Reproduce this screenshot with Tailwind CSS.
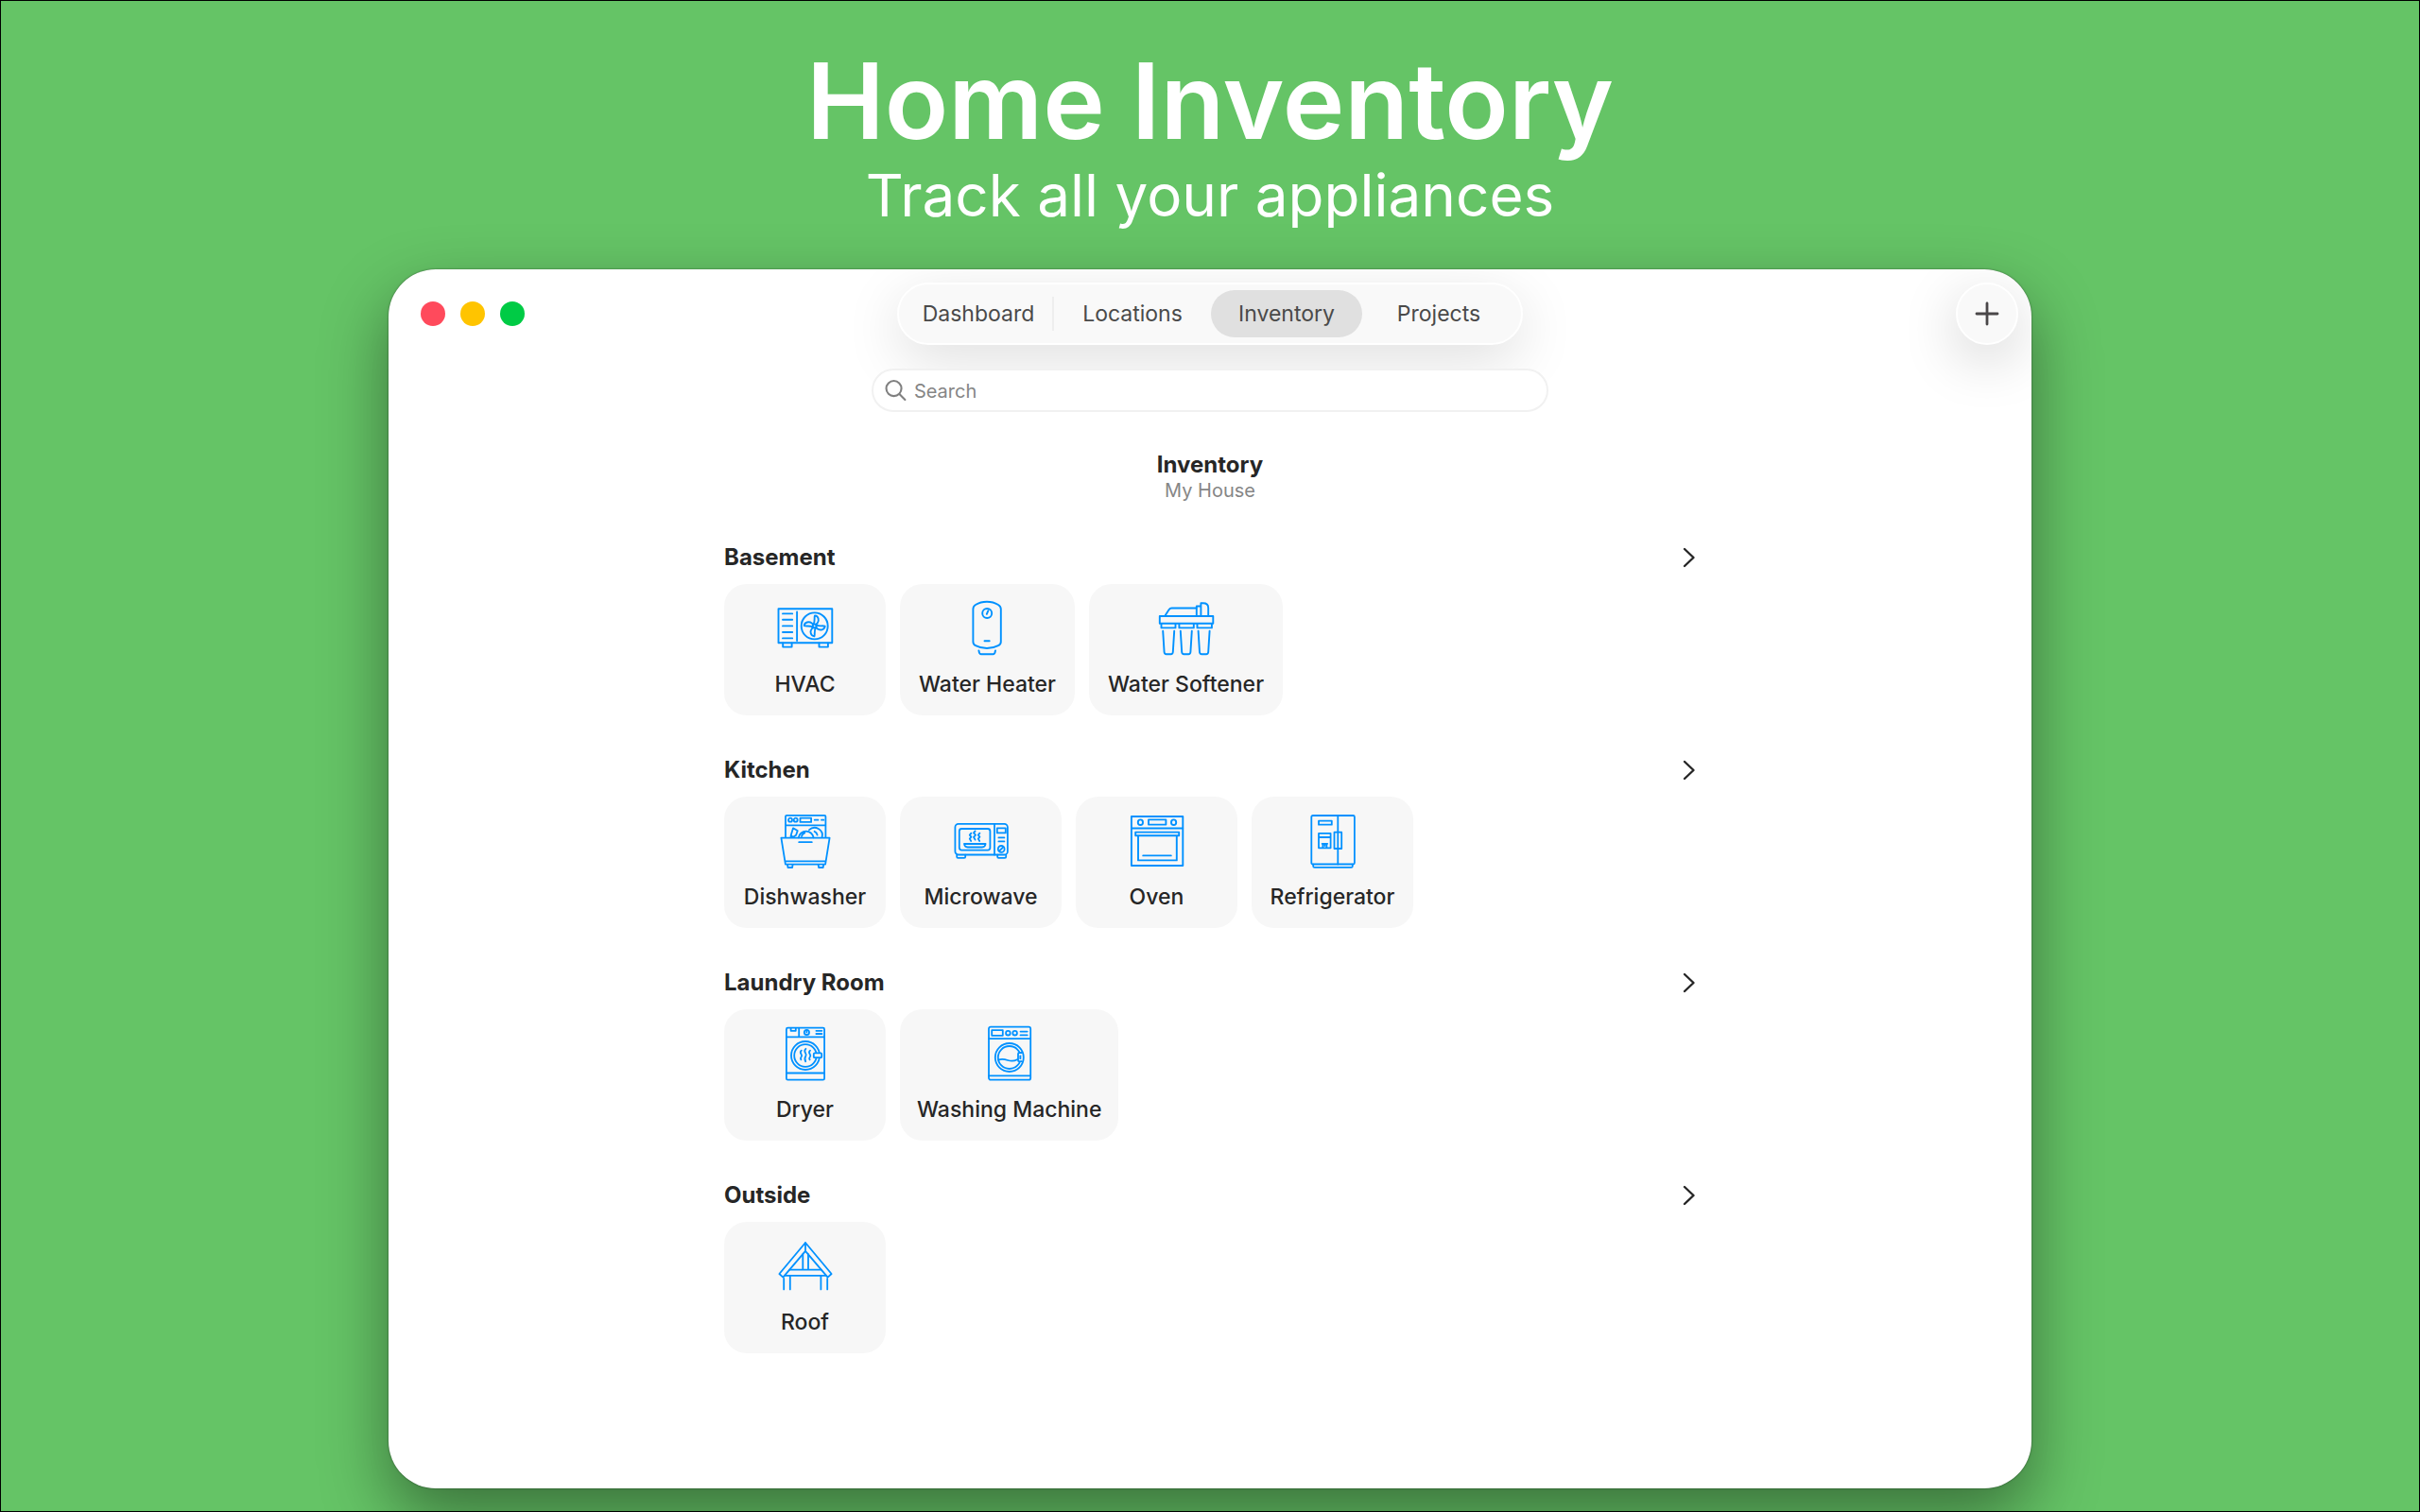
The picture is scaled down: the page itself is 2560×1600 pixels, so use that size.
<!DOCTYPE html>
<html lang="en">
<head>
    <meta charset="UTF-8">
    <meta name="viewport" content="width=device-width, initial-scale=1.0">
    <title>Home Inventory</title>
    <script src="https://cdn.jsdelivr.net/npm/@tailwindcss/browser@4"></script>
</head>
<body class="min-h-screen border border-black bg-[#65c466] font-['Inter',sans-serif] text-[#262626]">
    <header class="pt-[46px] text-center text-white">
        <h1 class="text-[111px] leading-[120px] font-semibold">Home Inventory</h1>
        <p class="text-[62px] leading-[79px]">Track all your appliances</p>
    </header>

    <main class="mx-auto mt-[39px] min-h-[1290px] w-full max-w-[1738px] overflow-hidden rounded-[50px] bg-white shadow-[0_0_2px_rgba(0,0,0,0.5),0_30px_70px_rgba(0,0,0,0.42)]">
        <!-- Toolbar -->
        <div class="grid grid-cols-[1fr_auto_1fr] items-center px-3.5 pt-3.5">
            <div class="flex gap-4 pl-5">
                <button aria-label="Close" class="size-[26px] rounded-full bg-[#ff4a5c]"></button>
                <button aria-label="Minimize" class="size-[26px] rounded-full bg-[#ffc400]"></button>
                <button aria-label="Zoom" class="size-[26px] rounded-full bg-[#00cb45]"></button>
            </div>

            <nav class="flex h-[66px] items-center rounded-full border-2 border-white bg-[#f9f9f9] px-1.5 text-[23px] text-[#4a4a4a] shadow-[0_16px_60px_rgba(0,0,0,0.13)]">
                <button class="h-[50px] w-[156px] rounded-full">Dashboard</button>
                <span class="h-9 w-0.5 bg-[#eeeeee]"></span>
                <button class="h-[50px] w-[166px] rounded-full">Locations</button>
                <button class="h-[50px] w-[160px] rounded-full bg-[#e0e0e0]">Inventory</button>
                <button class="h-[50px] w-[162px] rounded-full">Projects</button>
            </nav>

            <button aria-label="Add item" class="flex size-[66px] items-center justify-center justify-self-end rounded-full border-2 border-white bg-[#f9f9f9] shadow-[0_16px_60px_rgba(0,0,0,0.18)]">
                <svg class="size-[26px]" viewBox="0 0 26 26" fill="none" stroke="#4a4749" stroke-width="2.8" stroke-linecap="round">
                    <path d="M13 2v22M2 13h22" />
                </svg>
            </button>
        </div>

        <!-- Search -->
        <label class="relative mx-auto mt-[25px] flex h-[46px] w-full max-w-[716px] items-center gap-2 rounded-full border-2 border-[#f1f1f1] bg-white px-3">
            <svg class="size-6" viewBox="0 0 24 24" fill="none" stroke="#808080" stroke-width="2.2" stroke-linecap="round">
                <circle cx="10" cy="10" r="8.4" />
                <path d="M16.2 16.2L22.4 22.4" />
            </svg>
            <input type="search" placeholder="Search" class="w-full bg-transparent pt-0.5 text-[20px] outline-none placeholder:text-[#868686]">
        </label>

        <div class="mt-[42px] text-center">
            <h2 class="text-[24px] leading-7 font-bold">Inventory</h2>
            <p class="text-[20px] leading-[26px] text-[#868686]">My House</p>
        </div>

        <div class="mx-auto mt-11 flex w-full max-w-[1028px] flex-col gap-11">
            <section>
                <a href="#basement" class="mb-3.5 flex items-center justify-between">
                    <h3 class="text-[24px] leading-7 font-bold">Basement</h3>
                    <svg class="h-[22px] w-3.5" viewBox="0 0 14 22" fill="none" stroke="#262626" stroke-width="2.4" stroke-linecap="round" stroke-linejoin="round">
                        <path d="M2 2l9.500 9L2 20" />
                    </svg>
                </a>
                <div class="flex gap-[15px]">
                    <button class="flex min-w-[171px] flex-col items-center gap-[15px] rounded-3xl bg-[#f7f7f7] px-5 pt-[17px] pb-[19px]">
                        <svg class="size-[60px]" viewBox="0 0 60 60" fill="none" stroke="#0091ff" stroke-width="1.9" stroke-linecap="round" stroke-linejoin="round">
                            <rect x="1.5" y="9.2" width="56.8" height="36" />
                            <path d="M21.1 12.5V43M6 14.4h10.2M6 20.8h10.2M6 27.4h10.2M6 34h10.2M6 40.4h10.2" />
                            <path d="M6.2 45.4v4.2h9.4v-4.2M44.5 45.4v4.2h9.4v-4.2" />
                            <circle cx="39.7" cy="27.4" r="14" />
                            <circle cx="39.7" cy="27.4" r="2" />
                            <path d="M38.6 25.6C40.5 22 39 19 40 16.4c3.8.4 5 5 2.6 8.2l-1.8 1.5" />
                            <path d="M41.5 26.3c3.6 1.9 6.6.4 9.2 1.4-.4 3.8-5 5-8.2 2.6l-1.5-1.8" />
                            <path d="M40.8 29.2c-1.9 3.6-.4 6.6-1.4 9.2-3.8-.4-5-5-2.6-8.2l1.8-1.5" />
                            <path d="M37.9 28.5c-3.6-1.9-6.6-.4-9.2-1.4.4-3.8 5-5 8.2-2.6l1.5 1.8" />
                        </svg>
                        <span class="text-[23px] leading-7 font-medium">HVAC</span>
                    </button>
                    <button class="flex min-w-[171px] flex-col items-center gap-[15px] rounded-3xl bg-[#f7f7f7] px-5 pt-[17px] pb-[19px]">
                        <svg class="size-[60px]" viewBox="0 0 60 60" fill="none" stroke="#0091ff" stroke-width="1.9" stroke-linecap="round" stroke-linejoin="round">
                            <path d="M15.4 9.5C15.4 7 16 6.2 18 5c7-4.4 17-4.4 24 0 2 1.2 2.8 2 2.8 4.5v34.5c0 2.5-.8 3.3-2.8 4.2-7 3.8-17 3.8-24 0-2-.9-2.6-1.7-2.6-4.2z" />
                            <circle cx="30.2" cy="14" r="5" />
                            <path d="M29.8 14.8l1.6-3.6M27.5 43.2h5.2" />
                            <path d="M21.4 53.4c.3 2.4 1 3.9 2.6 3.9h12.4c1.6 0 2.3-1.5 2.6-3.9" />
                        </svg>
                        <span class="text-[23px] leading-7 font-medium">Water Heater</span>
                    </button>
                    <button class="flex min-w-[171px] flex-col items-center gap-[15px] rounded-3xl bg-[#f7f7f7] px-5 pt-[17px] pb-[19px]">
                        <svg class="size-[60px]" viewBox="0 0 60 60" fill="none" stroke="#0091ff" stroke-width="1.9" stroke-linecap="round" stroke-linejoin="round">
                            <rect x="1.8" y="17" width="56.5" height="7.8" />
                            <path d="M7.5 16.4l4-6.2c.8-1.2 1.6-1.7 3-1.7h26" />
                            <path d="M40.8 15.8V6.5h4.6M45.4 16.4V3.2h2.2c3.4 0 5.6 2 5.6 5v8.2" />
                            <path d="M3.5 25v4.4h15V25M22.4 25v4.4h15.4V25M41.5 25v4.4h15.4V25" />
                            <path d="M5.2 32.6l1.4 22.4c.1 1.5.8 2.2 2.2 2.2h4.8c1.4 0 2.1-.7 2.2-2.2l1.4-22.4" />
                            <path d="M23.8 32.6l1.4 22.4c.1 1.5.8 2.2 2.2 2.2h4.8c1.4 0 2.1-.7 2.2-2.2l1.4-22.4" />
                            <path d="M42.6 32.6l1.4 22.4c.1 1.5.8 2.2 2.2 2.2h4.8c1.4 0 2.1-.7 2.2-2.2l1.4-22.4" />
                        </svg>
                        <span class="text-[23px] leading-7 font-medium">Water Softener</span>
                    </button>
                </div>
            </section>

            <section>
                <a href="#kitchen" class="mb-3.5 flex items-center justify-between">
                    <h3 class="text-[24px] leading-7 font-bold">Kitchen</h3>
                    <svg class="h-[22px] w-3.5" viewBox="0 0 14 22" fill="none" stroke="#262626" stroke-width="2.4" stroke-linecap="round" stroke-linejoin="round">
                        <path d="M2 2l9.500 9L2 20" />
                    </svg>
                </a>
                <div class="flex gap-[15px]">
                    <button class="flex min-w-[171px] flex-col items-center gap-[15px] rounded-3xl bg-[#f7f7f7] px-[18px] pt-[17px] pb-[19px]">
                        <svg class="size-[60px]" viewBox="0 0 60 60" fill="none" stroke="#0091ff" stroke-width="1.8" stroke-linecap="round" stroke-linejoin="round">
                            <path d="M9 26V4c0-.8.4-1.2 1.2-1.2h40c.8 0 1.2.4 1.2 1.2v22M9 13.4h42.4" />
                            <circle cx="14" cy="7.7" r="2" />
                            <circle cx="19.7" cy="7.7" r="2" />
                            <path d="M24.500 5.700h11.600v4.200H24.500zM39.700 7.700h3.800M47 7.700h2.400" />
                            <path d="M17 16.300l4.700 2.800-1.600 4.600-3.400 2.200-2-2zM15.400 25.600l-1-.6" />
                            <path d="M22.800 26.300a8 8 0 0 1 15.800 0M26 25.200a5 5 0 0 1 3.300-3.800M34 18.200a8.200 8.200 0 0 1 13.600 8M39.600 19.800a5 5 0 0 1 3 3.800" />
                            <path d="M4.400 26.600h51.200l-4.500 28H8.900zM8.700 51.400h42.600M23.200 31.200h13.600" />
                            <path d="M11 54.800l.5 3.200h4.600l.5-3.200M43.600 54.800l.5 3.200h4.600l.5-3.200" />
                        </svg>
                        <span class="text-[23px] leading-7 font-medium">Dishwasher</span>
                    </button>
                    <button class="flex min-w-[171px] flex-col items-center gap-[15px] rounded-3xl bg-[#f7f7f7] px-[18px] pt-[17px] pb-[19px]">
                        <svg class="size-[60px]" viewBox="0 0 60 60" fill="none" stroke="#0091ff" stroke-width="1.8" stroke-linecap="round" stroke-linejoin="round">
                            <rect x="2.4" y="11.9" width="55.5" height="32.6" rx="3.5" />
                            <path d="M44 12v32.5" />
                            <rect x="6.8" y="17" width="32.6" height="22.6" rx="2.5" />
                            <path d="M4.2 44.7v2c0 .8.4 1.2 1.2 1.2h6.6c.8 0 1.2-.4 1.2-1.2v-2M47.2 44.7v2c0 .8.4 1.2 1.2 1.2h6.6c.8 0 1.2-.4 1.2-1.2v-2" />
                            <path d="M46.8 16.4h9v5h-9zM48.4 26.4h6M48.4 30.4h6" />
                            <circle cx="51.2" cy="38.4" r="3.4" />
                            <path d="M49.6 40l3.2-3.2" />
                            <path d="M12 33h22.6c-.3 2.3-1.4 3.5-3.6 3.5H15.6c-2.2 0-3.3-1.2-3.6-3.5z" />
                            <path d="M19.4 21.600l-1.600 2 1.600 2-1.600 2 1.400 2.400M23.600 19.400l-1.600 2 2 2.200-2 2.200 1.600 2.800M28.400 21.600l-1.600 2 1.600 2-1.600 2 1.400 2.400" />
                        </svg>
                        <span class="text-[23px] leading-7 font-medium">Microwave</span>
                    </button>
                    <button class="flex min-w-[171px] flex-col items-center gap-[15px] rounded-3xl bg-[#f7f7f7] px-[18px] pt-[17px] pb-[19px]">
                        <svg class="size-[60px]" viewBox="0 0 60 60" fill="none" stroke="#0091ff" stroke-width="1.9" stroke-linecap="round" stroke-linejoin="round">
                            <rect x="2.9" y="4" width="54.4" height="52" />
                            <path d="M3 16.5h54.2" />
                            <ellipse cx="12.4" cy="10.2" rx="2.6" ry="2.8" />
                            <ellipse cx="47.6" cy="10.2" rx="2.6" ry="2.8" />
                            <path d="M21 7.4h18.4v5.2H21z" />
                            <path d="M7.2 20.6h46v3.6h-46zM10 24.4v26h40.8v-26M15.2 45.4h29.6" />
                        </svg>
                        <span class="text-[23px] leading-7 font-medium">Oven</span>
                    </button>
                    <button class="flex min-w-[171px] flex-col items-center gap-[15px] rounded-3xl bg-[#f7f7f7] px-[18px] pt-[17px] pb-[19px]">
                        <svg class="size-[60px]" viewBox="0 0 60 60" fill="none" stroke="#0091ff" stroke-width="1.8" stroke-linecap="round" stroke-linejoin="round">
                            <rect x="7.3" y="3" width="45.6" height="51.5" rx="1.5" />
                            <path d="M35.3 3v51.5M9.2 54.6v1.8c0 .9.5 1.4 1.4 1.4h38.8c.9 0 1.4-.5 1.4-1.4v-1.8" />
                            <path d="M15 8.7h13.8v4H15zM15 21.9h12.6v15.4H15zM15 26h12.6" />
                            <path d="M18.6 32.8h5.6M19.4 33v4M23.4 33v4M21.4 33v2" />
                            <path d="M31.5 20.7h7.7v17.3h-7.7z" />
                        </svg>
                        <span class="text-[23px] leading-7 font-medium">Refrigerator</span>
                    </button>
                </div>
            </section>

            <section>
                <a href="#laundry-room" class="mb-3.5 flex items-center justify-between">
                    <h3 class="text-[24px] leading-7 font-bold">Laundry Room</h3>
                    <svg class="h-[22px] w-3.5" viewBox="0 0 14 22" fill="none" stroke="#262626" stroke-width="2.4" stroke-linecap="round" stroke-linejoin="round">
                        <path d="M2 2l9.500 9L2 20" />
                    </svg>
                </a>
                <div class="flex gap-[15px]">
                    <button class="flex min-w-[171px] flex-col items-center gap-[15px] rounded-3xl bg-[#f7f7f7] px-[18px] pt-[17px] pb-[19px]">
                        <svg class="size-[60px]" viewBox="0 0 60 60" fill="none" stroke="#0091ff" stroke-width="1.8" stroke-linecap="round" stroke-linejoin="round">
                            <rect x="9.9" y="2.7" width="40.2" height="55" rx="1.5" />
                            <path d="M10 12.3h40M10 50.5h40M23.2 3v9M14.6 3v2.8h5.2V3M41.4 5.8h6M41.4 9h6" />
                            <circle cx="31.4" cy="7.4" r="2.6" />
                            <path d="M31.4 6v1.4" />
                            <circle cx="30" cy="32" r="15" />
                            <circle cx="30" cy="32" r="11.8" />
                            <rect x="38.8" y="29.4" width="8.4" height="4.8" rx="1" fill="#f7f7f7" />
                            <path d="M25.8 26.600c-3.200 2.800 1.600 4 0 6.400-1 1.300-1.300 2.200-.4 3.400M30.400 24.800c-3.600 3.400 1.800 4.600 0 7.600-1.400 2-1.400 3.600-.2 5.800M35 26.600c-3.200 2.800 1.600 4 0 6.400-1 1.300-1.300 2.200-.4 3.400" />
                        </svg>
                        <span class="text-[23px] leading-7 font-medium">Dryer</span>
                    </button>
                    <button class="flex min-w-[171px] flex-col items-center gap-[15px] rounded-3xl bg-[#f7f7f7] px-[18px] pt-[17px] pb-[19px]">
                        <svg class="size-[60px]" viewBox="0 0 60 60" fill="none" stroke="#0091ff" stroke-width="1.8" stroke-linecap="round" stroke-linejoin="round">
                            <rect x="8" y="1.6" width="44.2" height="56.1" rx="2" />
                            <path d="M8 14.2h44M8 53.4h44M11.2 5.2h11.6v5.6H11.200zM41.5 6.6h7.2M41.5 10.4h7.2" />
                            <circle cx="28.4" cy="8.2" r="2.3" />
                            <circle cx="35.6" cy="8.2" r="2.3" />
                            <circle cx="29.8" cy="34" r="15" />
                            <circle cx="29.8" cy="34" r="12" />
                            <path d="M18.2 36.6c4-1.6 7-.6 10 .4 3.4 1.1 6.6 1 9.8-.8" />
                            <path d="M42.8 29h-2.5c-.8 0-1.3.5-1.3 1.3v6.6c0 .8.5 1.3 1.3 1.3h2.5" fill="#f7f7f7" />
                            <path d="M41.3 32.4v2.8" />
                        </svg>
                        <span class="text-[23px] leading-7 font-medium">Washing Machine</span>
                    </button>
                </div>
            </section>

            <section>
                <a href="#outside" class="mb-3.5 flex items-center justify-between">
                    <h3 class="text-[24px] leading-7 font-bold">Outside</h3>
                    <svg class="h-[22px] w-3.5" viewBox="0 0 14 22" fill="none" stroke="#262626" stroke-width="2.4" stroke-linecap="round" stroke-linejoin="round">
                        <path d="M2 2l9.500 9L2 20" />
                    </svg>
                </a>
                <div class="flex gap-[15px]">
                    <button class="flex min-w-[171px] flex-col items-center gap-[15px] rounded-3xl bg-[#f7f7f7] px-[18px] pt-[17px] pb-[19px]">
                        <svg class="size-[60px]" viewBox="0 0 60 60" fill="none" stroke="#0091ff" stroke-width="1.8" stroke-linecap="round" stroke-linejoin="round">
                            <path d="M30 5L2.4 38l4 3.6L30 13.8l23.6 27.8 4-3.6zM30 5v8.8" />
                            <path d="M13.2 33.6h33.6M8 39.8h44M27.3 17.2v16.2M33 17.2v16.2" />
                            <path d="M7.2 43v11.4M13.8 40v14.4M46.4 40v14.4M53.2 43v11.4" />
                        </svg>
                        <span class="text-[23px] leading-7 font-medium">Roof</span>
                    </button>
                </div>
            </section>
        </div>
    </main>
</body>
</html>
